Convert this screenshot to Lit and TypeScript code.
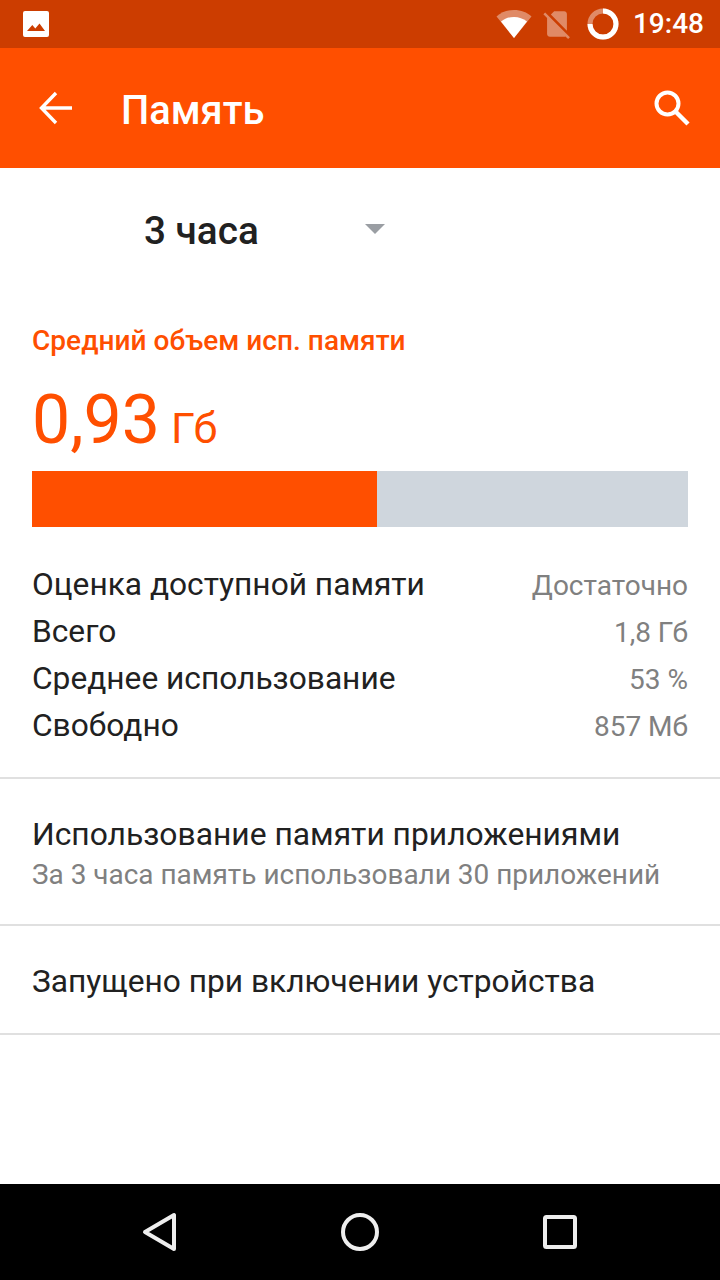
import { LitElement, html, css } from "lit";
import { customElement } from "lit/decorators.js";

@customElement("app-root")
export class AppRoot extends LitElement {
  static styles = css`
    :host { display: block; width: 720px; height: 1280px; background: #fff; font-family: Roboto, sans-serif; overflow: hidden; }
    .page { display: flex; flex-direction: column; height: 1280px; }
    .status { height: 48px; background: #cc3d00; display: flex; align-items: center; flex: none; padding: 0 16px 0 22px; }
    .status .spacer { flex: 1; }
    .status svg { display: block; }
    .time { color: #fff; font-size: 28px; font-weight: 500; margin-left: 14px; line-height: 48px; }
    .sim { margin-left: 8px; }
    .ring { margin-left: 13px; }
    .appbar { height: 120px; background: #ff4f00; display: flex; align-items: center; flex: none; padding: 0 29px 0 38px; color: #fff; }
    .title { font-size: 39.8px; font-weight: 500; margin-left: 47px; flex: 1; padding-top: 4px; }
    .content { flex: 1; }
    .spinner { height: 126px; display: flex; align-items: center; padding: 0 0 2px 144px; box-sizing: border-box; font-size: 38.7px; font-weight: 500; color: #212121; }
    .spinner svg { margin-left: 106px; margin-top: -2px; }
    .avg { padding: 0 32px; }
    .label { margin-top: 30px; font-size: 28px; font-weight: 500; color: #ff4f00; line-height: 34px; letter-spacing: 0.04px; }
    .value { color: #ff4f00; font-size: 68px; line-height: 80px; margin-top: 22px; }
    .value span { font-size: 43px; margin-left: 11px; }
    .bar { display: flex; height: 56px; background: #cfd6dd; margin-top: 3px; }
    .bar div { background: #ff4f00; }
    .rows { margin-top: 34px; display: flex; flex-direction: column; padding-bottom: 28px; }
    .row { display: flex; justify-content: space-between; align-items: center; height: 47px; font-size: 31.7px; color: #212121; }
    .row span:last-child { font-size: 28px; color: #808080; padding-top: 2px; }
    .item { border-top: 2px solid #e0e0e0; padding: 0 32px; color: #212121; font-size: 31.8px; }
    .item.a { padding-top: 34px; box-sizing: border-box; height: 147px; }
    .item.b { display: flex; align-items: center; box-sizing: border-box; border-bottom: 2px solid #e0e0e0; height: 111px; padding-top: 4px; font-size: 31.7px; }
    .item .t { line-height: 42px; }
    .item .s { font-size: 27.95px; color: #808080; line-height: 40px; }
    .nav { height: 96px; background: #000; flex: none; display: flex; align-items: center; justify-content: center; }
    .nav div { width: 200px; display: flex; justify-content: center; }
  `;

  render() {
    const rows = [
      ["Оценка доступной памяти", "Достаточно"],
      ["Всего", "1,8 Гб"],
      ["Среднее использование", "53 %"],
      ["Свободно", "857 Мб"],
    ];
    return html`<div class="page">
      <div class="status">
        <svg width="28" height="28" viewBox="0 0 28 28"><path fill-rule="evenodd" fill="#fff" d="M3 1h22a2 2 0 0 1 2 2v22a2 2 0 0 1-2 2H3a2 2 0 0 1-2-2V3a2 2 0 0 1 2-2zM5 21h18l-5.500-7.500-4.200 5-3-3.500z"/></svg>
        <div class="spacer"></div>
        <svg width="36" height="28" viewBox="0 0 36 28"><path fill="#fff" fill-opacity=".4" d="M18 0C11 0 5 2.300 0.500 6.500L18 28 35.500 6.500C31 2.300 25 0 18 0z"/><path fill="#fff" d="M18 28 5 11.500C9 8.500 13 7 18 7s9 1.500 13 4.500z"/></svg>
        <svg class="sim" width="34" height="34" viewBox="0 0 24 24"><path fill="#fff" fill-opacity=".4" d="M18.990 5c0-1.100-.89-2-1.990-2h-7L7.660 5.340 19 16.680 18.990 5zM3.650 3.880L2.380 5.150 5 7.770V19c0 1.100.9 2 2 2h10.010c.35 0 .67-.1.96-.26l1.880 1.880 1.270-1.270L3.650 3.880z"/></svg>
        <svg class="ring" width="32" height="32" viewBox="0 0 32 32"><circle cx="16" cy="16" r="13" fill="none" stroke="#fff" stroke-opacity=".4" stroke-width="5"/><path d="M16 3A13 13 0 1 1 3 16" fill="none" stroke="#fff" stroke-width="5"/></svg>
        <div class="time">19:48</div>
      </div>
      <div class="appbar">
        <svg width="36" height="36" viewBox="0 0 36 36"><path fill="none" stroke="#fff" stroke-width="3.400" d="M34 18H4M18 3 3.500 18 18 33"/></svg>
        <div class="title">Память</div>
        <svg width="38" height="38" viewBox="0 0 38 38"><circle cx="14.500" cy="14.500" r="11" fill="none" stroke="#fff" stroke-width="4"/><path d="M22.500 22.500 35 35" stroke="#fff" stroke-width="4.400" fill="none"/></svg>
      </div>
      <div class="content">
        <div class="spinner">3 часа
          <svg width="20" height="10" viewBox="0 0 20 10"><path fill="#9a9ea3" d="M0 0h20L10 10z"/></svg>
        </div>
        <div class="avg">
          <div class="label">Средний объем исп. памяти</div>
          <div class="value">0,93<span>Гб</span></div>
          <div class="bar"><div style="width: 345px"></div></div>
          <div class="rows">
            ${rows.map((r) => html`<div class="row"><span>${r[0]}</span><span>${r[1]}</span></div>`)}
          </div>
        </div>
        <div class="item a">
          <div class="t">Использование памяти приложениями</div>
          <div class="s">За 3 часа память использовали 30 приложений</div>
        </div>
        <div class="item b">Запущено при включении устройства</div>
      </div>
      <div class="nav">
        <div><svg width="36" height="40" viewBox="0 0 36 40"><path fill="none" stroke="#eee" stroke-width="4" stroke-linejoin="round" d="M32 3V37L3 20z"/></svg></div>
        <div><svg width="38" height="38" viewBox="0 0 38 38"><circle cx="19" cy="19" r="17" fill="none" stroke="#eee" stroke-width="4"/></svg></div>
        <div><svg width="34" height="34" viewBox="0 0 34 34"><rect x="2" y="2" width="30" height="30" rx="1.500" fill="none" stroke="#eee" stroke-width="4"/></svg></div>
      </div>
    </div>`;
  }
}
